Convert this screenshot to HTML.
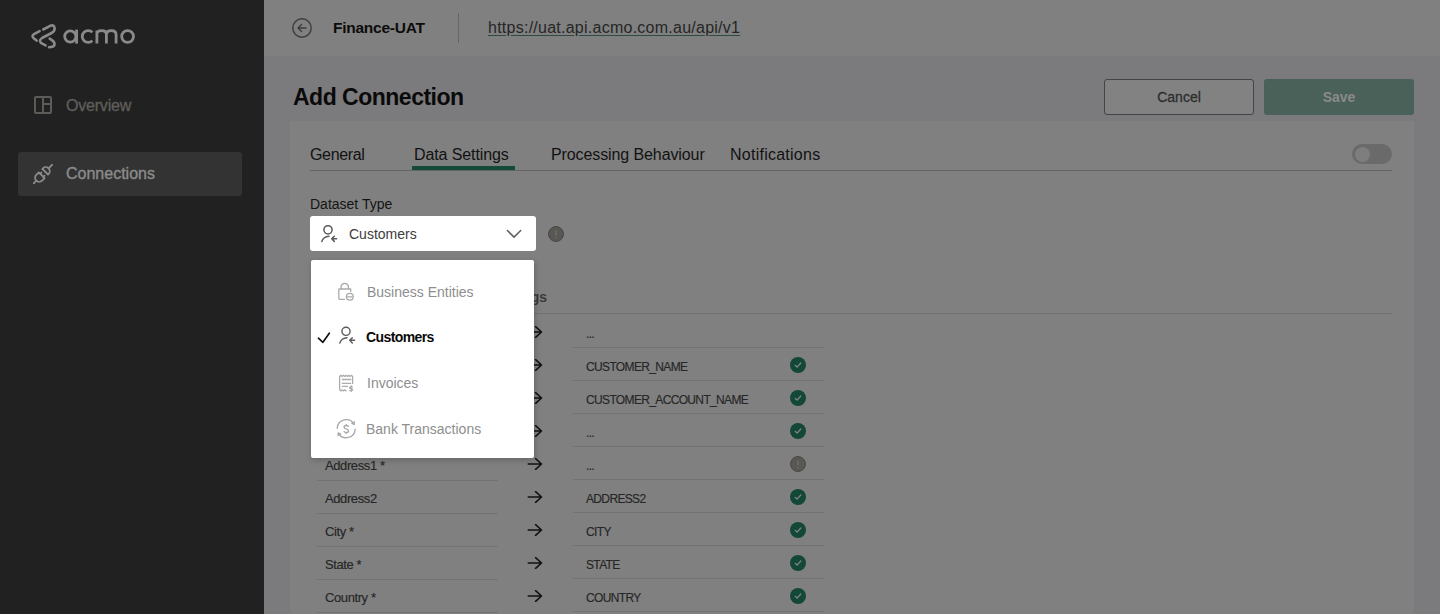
<!DOCTYPE html>
<html><head><meta charset="utf-8">
<style>
*{box-sizing:border-box;margin:0;padding:0}
html,body{width:1440px;height:614px;overflow:hidden;background:#7b7b7d;font-family:"Liberation Sans",sans-serif}
.a{position:absolute;white-space:nowrap}
.t{position:absolute;white-space:nowrap;line-height:1}
#side{position:absolute;left:0;top:0;width:264px;height:614px;background:#212121}
#hdr{position:absolute;left:264px;top:0;width:1176px;height:56px;background:#808080}
#card{position:absolute;left:290px;top:121px;width:1124px;height:600px;background:#808080}
.hl{position:absolute;height:1px;background:#737373}
.arrow{position:absolute;width:14px;height:12px}
.chk{position:absolute;width:16px;height:16px;border-radius:50%;background:#154c3c}
.lt{position:absolute;font-size:13px;line-height:1;color:#262626;white-space:nowrap;letter-spacing:-0.4px;-webkit-text-stroke:0.15px #262626}
.rt{position:absolute;font-size:12px;line-height:1;color:#262626;white-space:nowrap;letter-spacing:-0.65px;-webkit-text-stroke:0.15px #262626}
</style></head><body>
<div id="side">
  <!-- logo -->
  <svg class="a" style="left:0;top:0" width="264" height="60" viewBox="0 0 264 60">
    <g fill="none" stroke="#8a8a8a" stroke-width="2.6" stroke-linecap="round" stroke-linejoin="round">
      <path d="M39.6 31.2 L34 34.2 Q31.4 35.8 33.4 38 L36.6 40.6"/>
      <path d="M43.2 29.5 L50.2 25.8 Q54.4 24.2 54.6 28.6 Q54.7 31.4 51.6 33 L42 38 Q38.8 40 40.8 42.8 L45.6 45.4"/>
      <path d="M49.7 38.7 L52.6 40.6 Q55 42.4 54.4 45.2 Q53.8 47.2 49 47.3"/>
    </g>
    <g fill="none" stroke="#8a8a8a" stroke-width="2.8" stroke-linecap="butt">
      <circle cx="70.3" cy="36.5" r="5.6"/>
      <path d="M76.6 29.6 V43.6"/>
      <path d="M92.4 32.4 A5.9 5.9 0 1 0 92.4 40.6"/>
      <path d="M96.9 43.6 V30.4 M96.9 34.4 Q96.9 30.6 101.6 30.6 Q106.4 30.6 106.4 34.6 V43.6 M106.4 34.6 Q106.4 30.6 111.2 30.6 Q116.1 30.6 116.1 34.6 V43.6"/>
      <circle cx="127.6" cy="36.5" r="5.9"/>
    </g>
  </svg>
  <!-- overview -->
  <svg class="a" style="left:34px;top:96px" width="18" height="18" viewBox="0 0 18 18">
    <g fill="none" stroke="#5d5b58" stroke-width="2"><rect x="1" y="1" width="16" height="16" rx="1"/><path d="M9 1V17M9 8H17"/></g>
  </svg>
  <div class="t" style="left:66px;top:98px;font-size:16px;color:#5f5d5a;-webkit-text-stroke:0.35px #5f5d5a;letter-spacing:-0.2px">Overview</div>
  <!-- active item -->
  <div class="a" style="left:18px;top:152px;width:224px;height:44px;background:#333333;border-radius:3px"></div>
  <svg class="a" style="left:33px;top:164px" width="20" height="20" viewBox="0 0 20 20">
    <g transform="rotate(-45 10 10)" fill="none" stroke="#8c8c8c" stroke-width="1.8" stroke-linecap="round" stroke-linejoin="round">
      <path d="M-3.2 10H0.6"/>
      <path d="M8.2 5.9V14.1H4.6A4.1 4.1 0 0 1 4.6 5.9Z"/>
      <path d="M8.2 7.8H9.9M8.2 12.2H9.9"/>
      <path d="M13.2 5.9V13.9H14A4 4 0 0 0 14 5.9Z"/>
      <path d="M18 9.9H23.2"/>
    </g>
  </svg>
  <div class="t" style="left:66px;top:165.5px;font-size:16px;color:#8c8c8c;-webkit-text-stroke:0.35px #8c8c8c">Connections</div>
</div>

<div id="hdr"></div>
<svg class="a" style="left:292px;top:18px" width="20" height="20" viewBox="0 0 20 20">
  <g fill="none" stroke="#3c3c3c" stroke-width="1.4" stroke-linecap="round" stroke-linejoin="round">
    <circle cx="10" cy="10" r="9.2"/><path d="M14 10H6M9.5 6.6L6 10L9.5 13.4"/>
  </g>
</svg>
<div class="t" style="left:333px;top:19.8px;font-size:15.5px;font-weight:700;color:#0c0c0c;letter-spacing:-0.25px">Finance-UAT</div>
<div class="a" style="left:458px;top:13px;width:1px;height:30px;background:#666"></div>
<div class="t" style="left:488px;top:19.5px;font-size:16px;color:#262626;letter-spacing:0.25px;text-decoration:underline;text-underline-offset:2px;text-decoration-color:#2f4a40">https://uat.api.acmo.com.au/api/v1</div>

<div class="t" style="left:293px;top:85.5px;font-size:23px;font-weight:700;color:#0a0a0a;letter-spacing:-0.5px">Add Connection</div>
<div class="a" style="left:1104px;top:79px;width:150px;height:36px;border:1px solid #444;border-radius:3px;background:#828282"></div>
<div class="t" style="left:1104px;top:89.5px;width:150px;text-align:center;font-size:14px;color:#2e2e2e;-webkit-text-stroke:0.3px #2e2e2e">Cancel</div>
<div class="a" style="left:1264px;top:79px;width:150px;height:36px;background:#4a6159;border-radius:3px"></div>
<div class="t" style="left:1264px;top:89.5px;width:150px;text-align:center;font-size:14px;font-weight:700;color:#8a8a8a">Save</div>

<div id="card"></div>
<!-- tabs -->
<div class="t" style="left:310px;top:146.5px;font-size:16px;color:#121212;letter-spacing:-0.35px">General</div>
<div class="t" style="left:414px;top:146.5px;font-size:16px;color:#121212;letter-spacing:-0.1px">Data Settings</div>
<div class="t" style="left:551px;top:146.5px;font-size:16px;color:#121212;letter-spacing:-0.1px">Processing Behaviour</div>
<div class="t" style="left:730px;top:146.5px;font-size:16px;color:#121212;letter-spacing:0.25px">Notifications</div>
<div class="hl" style="left:310px;top:170px;width:1082px;background:#646464"></div>
<div class="a" style="left:412px;top:166px;width:103px;height:4px;background:#134a3a"></div>
<div class="a" style="left:1352px;top:144px;width:40px;height:20px;border-radius:10px;background:#6a6a6a"></div>
<div class="a" style="left:1355px;top:146.5px;width:15px;height:15px;border-radius:50%;background:#7e7e7e"></div>

<div class="t" style="left:310px;top:197px;font-size:14px;color:#141414">Dataset Type</div>
<!-- info icon -->
<svg class="a" style="left:548px;top:226px" width="16" height="16" viewBox="0 0 16 16"><circle cx="8" cy="8" r="7.5" fill="#595754" stroke="#4a4845" stroke-width="1"/><path d="M8 4.6V9.6" stroke="#6e6c6a" stroke-width="1.6"/><circle cx="8" cy="11.6" r="0.9" fill="#6e6c6a"/></svg>

<!-- section -->
<div class="t" style="left:330px;top:290px;width:217px;text-align:right;font-size:14px;font-weight:700;color:#3a3a3a">Default Field Mappings</div>
<div class="hl" style="left:310px;top:313px;width:1082px;background:#717171"></div>
<!--rows-->
<div class="hl" style="left:573px;top:347px;width:251px"></div>
<div class="hl" style="left:317px;top:348px;width:181px"></div>
<div class="lt" style="left:325px;top:327.3px">Customer ID *</div>
<div class="rt" style="left:586px;top:327.8px">...</div>
<svg class="a" style="left:527px;top:326px" width="16" height="12" viewBox="0 0 16 12"><path d="M1.3 6H14.5M8.6 0.6L14.5 6L8.6 11.4" fill="none" stroke="#111" stroke-width="1.6" stroke-linecap="round" stroke-linejoin="round"/></svg>
<div class="hl" style="left:573px;top:380px;width:251px"></div>
<div class="hl" style="left:317px;top:381px;width:181px"></div>
<div class="lt" style="left:325px;top:360.3px">Name *</div>
<div class="rt" style="left:586px;top:360.8px">CUSTOMER_NAME</div>
<svg class="a" style="left:527px;top:359px" width="16" height="12" viewBox="0 0 16 12"><path d="M1.3 6H14.5M8.6 0.6L14.5 6L8.6 11.4" fill="none" stroke="#111" stroke-width="1.6" stroke-linecap="round" stroke-linejoin="round"/></svg>
<svg class="a" style="left:790px;top:357px" width="16" height="16" viewBox="0 0 16 16"><circle cx="8" cy="8" r="8" fill="#134737"/><path d="M5.2 8.3L7.1 10.1L10.8 6" fill="none" stroke="#858585" stroke-width="1.2" stroke-linecap="round" stroke-linejoin="round"/></svg>
<div class="hl" style="left:573px;top:413px;width:251px"></div>
<div class="hl" style="left:317px;top:414px;width:181px"></div>
<div class="lt" style="left:325px;top:393.3px">Account Name</div>
<div class="rt" style="left:586px;top:393.8px">CUSTOMER_ACCOUNT_NAME</div>
<svg class="a" style="left:527px;top:392px" width="16" height="12" viewBox="0 0 16 12"><path d="M1.3 6H14.5M8.6 0.6L14.5 6L8.6 11.4" fill="none" stroke="#111" stroke-width="1.6" stroke-linecap="round" stroke-linejoin="round"/></svg>
<svg class="a" style="left:790px;top:390px" width="16" height="16" viewBox="0 0 16 16"><circle cx="8" cy="8" r="8" fill="#134737"/><path d="M5.2 8.3L7.1 10.1L10.8 6" fill="none" stroke="#858585" stroke-width="1.2" stroke-linecap="round" stroke-linejoin="round"/></svg>
<div class="hl" style="left:573px;top:446px;width:251px"></div>
<div class="hl" style="left:317px;top:447px;width:181px"></div>
<div class="lt" style="left:325px;top:426.3px">Email</div>
<div class="rt" style="left:586px;top:426.8px">...</div>
<svg class="a" style="left:527px;top:425px" width="16" height="12" viewBox="0 0 16 12"><path d="M1.3 6H14.5M8.6 0.6L14.5 6L8.6 11.4" fill="none" stroke="#111" stroke-width="1.6" stroke-linecap="round" stroke-linejoin="round"/></svg>
<svg class="a" style="left:790px;top:423px" width="16" height="16" viewBox="0 0 16 16"><circle cx="8" cy="8" r="8" fill="#134737"/><path d="M5.2 8.3L7.1 10.1L10.8 6" fill="none" stroke="#858585" stroke-width="1.2" stroke-linecap="round" stroke-linejoin="round"/></svg>
<div class="hl" style="left:573px;top:479px;width:251px"></div>
<div class="hl" style="left:317px;top:480px;width:181px"></div>
<div class="lt" style="left:325px;top:459.3px">Address1 *</div>
<div class="rt" style="left:586px;top:459.8px">...</div>
<svg class="a" style="left:527px;top:458px" width="16" height="12" viewBox="0 0 16 12"><path d="M1.3 6H14.5M8.6 0.6L14.5 6L8.6 11.4" fill="none" stroke="#111" stroke-width="1.6" stroke-linecap="round" stroke-linejoin="round"/></svg>
<svg class="a" style="left:790px;top:456px" width="16" height="16" viewBox="0 0 16 16"><circle cx="8" cy="8" r="7.5" fill="#595754" stroke="#4a4845" stroke-width="1"/><path d="M8 4.6V9.6" stroke="#6e6c6a" stroke-width="1.6"/><circle cx="8" cy="11.6" r="0.9" fill="#6e6c6a"/></svg>
<div class="hl" style="left:573px;top:512px;width:251px"></div>
<div class="hl" style="left:317px;top:513px;width:181px"></div>
<div class="lt" style="left:325px;top:492.3px">Address2</div>
<div class="rt" style="left:586px;top:492.8px">ADDRESS2</div>
<svg class="a" style="left:527px;top:491px" width="16" height="12" viewBox="0 0 16 12"><path d="M1.3 6H14.5M8.6 0.6L14.5 6L8.6 11.4" fill="none" stroke="#111" stroke-width="1.6" stroke-linecap="round" stroke-linejoin="round"/></svg>
<svg class="a" style="left:790px;top:489px" width="16" height="16" viewBox="0 0 16 16"><circle cx="8" cy="8" r="8" fill="#134737"/><path d="M5.2 8.3L7.1 10.1L10.8 6" fill="none" stroke="#858585" stroke-width="1.2" stroke-linecap="round" stroke-linejoin="round"/></svg>
<div class="hl" style="left:573px;top:545px;width:251px"></div>
<div class="hl" style="left:317px;top:546px;width:181px"></div>
<div class="lt" style="left:325px;top:525.3px">City *</div>
<div class="rt" style="left:586px;top:525.8px">CITY</div>
<svg class="a" style="left:527px;top:524px" width="16" height="12" viewBox="0 0 16 12"><path d="M1.3 6H14.5M8.6 0.6L14.5 6L8.6 11.4" fill="none" stroke="#111" stroke-width="1.6" stroke-linecap="round" stroke-linejoin="round"/></svg>
<svg class="a" style="left:790px;top:522px" width="16" height="16" viewBox="0 0 16 16"><circle cx="8" cy="8" r="8" fill="#134737"/><path d="M5.2 8.3L7.1 10.1L10.8 6" fill="none" stroke="#858585" stroke-width="1.2" stroke-linecap="round" stroke-linejoin="round"/></svg>
<div class="hl" style="left:573px;top:578px;width:251px"></div>
<div class="hl" style="left:317px;top:579px;width:181px"></div>
<div class="lt" style="left:325px;top:558.3px">State *</div>
<div class="rt" style="left:586px;top:558.8px">STATE</div>
<svg class="a" style="left:527px;top:557px" width="16" height="12" viewBox="0 0 16 12"><path d="M1.3 6H14.5M8.6 0.6L14.5 6L8.6 11.4" fill="none" stroke="#111" stroke-width="1.6" stroke-linecap="round" stroke-linejoin="round"/></svg>
<svg class="a" style="left:790px;top:555px" width="16" height="16" viewBox="0 0 16 16"><circle cx="8" cy="8" r="8" fill="#134737"/><path d="M5.2 8.3L7.1 10.1L10.8 6" fill="none" stroke="#858585" stroke-width="1.2" stroke-linecap="round" stroke-linejoin="round"/></svg>
<div class="hl" style="left:573px;top:611px;width:251px"></div>
<div class="hl" style="left:317px;top:612px;width:181px"></div>
<div class="lt" style="left:325px;top:591.3px">Country *</div>
<div class="rt" style="left:586px;top:591.8px">COUNTRY</div>
<svg class="a" style="left:527px;top:590px" width="16" height="12" viewBox="0 0 16 12"><path d="M1.3 6H14.5M8.6 0.6L14.5 6L8.6 11.4" fill="none" stroke="#111" stroke-width="1.6" stroke-linecap="round" stroke-linejoin="round"/></svg>
<svg class="a" style="left:790px;top:588px" width="16" height="16" viewBox="0 0 16 16"><circle cx="8" cy="8" r="8" fill="#134737"/><path d="M5.2 8.3L7.1 10.1L10.8 6" fill="none" stroke="#858585" stroke-width="1.2" stroke-linecap="round" stroke-linejoin="round"/></svg>
<!--/rows-->
<!-- select -->
<div class="a" style="left:310px;top:216px;width:226px;height:35px;background:#fff;border-radius:3px"></div>
<svg class="a" style="left:319px;top:223px" width="20" height="20" viewBox="0 0 20 20">
  <g fill="none" stroke="#5a5a5a" stroke-width="1.5" stroke-linecap="round" stroke-linejoin="round">
    <circle cx="9" cy="6.8" r="4.1"/><path d="M2.8 18.6 Q4.4 13.5 10 13.2"/><path d="M17.6 15.8H13M15.3 13.2L12.7 15.8L15.3 18.4"/>
  </g>
</svg>
<div class="t" style="left:349px;top:227px;font-size:14px;color:#3c3c3c">Customers</div>
<svg class="a" style="left:506px;top:228px" width="17" height="11" viewBox="0 0 17 11">
  <path d="M1.4 2.5 L8 9.1 L14.7 2.5" fill="none" stroke="#5e5e5e" stroke-width="1.5" stroke-linecap="round" stroke-linejoin="round"/>
</svg>

<!-- dropdown -->
<div class="a" style="left:311px;top:260px;width:223px;height:198px;background:#fff;border-radius:2px;box-shadow:1px 2px 6px rgba(0,0,0,0.22)"></div>
<svg class="a" style="left:335px;top:281px" width="22" height="22" viewBox="0 0 22 22">
  <g fill="none" stroke="#ababab" stroke-width="1.3" stroke-linecap="round" stroke-linejoin="round">
    <path d="M6.1 8 V5.5 A3.7 3.7 0 0 1 13.4 5.5 V8"/>
    <path d="M15.7 10.4 V8 H4.6 Q3.8 8 3.8 8.8 V17.6 Q3.8 18.4 4.6 18.4 H9.5"/>
    <circle cx="14.8" cy="15.7" r="3.4"/><path d="M12.2 15.9 H17.2"/>
  </g>
</svg>
<div class="t" style="left:367px;top:285px;font-size:14px;color:#8e8e8e">Business Entities</div>

<svg class="a" style="left:316px;top:330px" width="16" height="16" viewBox="0 0 16 16">
  <path d="M2.4 8.2 L6.9 12.3 L13.3 3.2" fill="none" stroke="#111" stroke-width="1.7" stroke-linecap="round" stroke-linejoin="round"/>
</svg>
<svg class="a" style="left:337px;top:324.5px" width="20" height="20" viewBox="0 0 20 20">
  <g fill="none" stroke="#5a5a5a" stroke-width="1.4" stroke-linecap="round" stroke-linejoin="round">
    <circle cx="9" cy="6.3" r="4.1"/><path d="M2.8 18.1 Q4.4 13 10 12.7"/><path d="M17.6 15.3H13M15.3 12.7L12.7 15.3L15.3 17.9"/>
  </g>
</svg>
<div class="t" style="left:366px;top:330px;font-size:14px;font-weight:700;color:#0a0a0a;letter-spacing:-0.6px">Customers</div>

<svg class="a" style="left:336px;top:373px" width="20" height="20" viewBox="0 0 20 20">
  <g fill="none" stroke="#acacac" stroke-width="1.3" stroke-linecap="round" stroke-linejoin="round">
    <path d="M3.6 3.4 V16.8 L4.90 17.9 L6.20 16.8 L7.50 17.9 L8.80 16.8 L10.10 17.9"/><path d="M3.6 3.4 L4.90 2.3 L6.20 3.4 L7.50 2.3 L8.80 3.4 L10.10 2.3 L11.40 3.4 L12.70 2.3 L14.00 3.4 L15.30 2.3 L16.60 3.4 L16.6 3.4 V10.6"/>
    <path d="M6.3 6.5 H14.8 M6.3 10.3 H14.8 M6.3 13.3 H11.5"/>
    <path d="M15.2 12.8 V18.6 M16.4 13.8 H14.5 Q13.6 13.8 13.6 14.8 Q13.6 15.7 15.2 15.7 Q16.6 15.7 16.6 16.6 Q16.6 17.6 15.6 17.6 H13.8"/>
  </g>
</svg>
<div class="t" style="left:367px;top:376px;font-size:14px;color:#8e8e8e">Invoices</div>

<svg class="a" style="left:334px;top:417px" width="24" height="24" viewBox="0 0 24 24">
  <g fill="none" stroke="#a8a8a8" stroke-width="1.3" stroke-linecap="round" stroke-linejoin="round">
    <path d="M3.21 11.23 A9 9 0 0 1 20.07 7.34"/><path d="M20.34 4.75 L20.07 7.34 L17.73 6.2"/>
    <path d="M21.19 12.17 A9 9 0 0 1 4.33 16.06"/><path d="M4.06 18.65 L4.33 16.06 L6.67 17.2"/>
    <path d="M14.3 9.4 Q13.8 8.5 12.2 8.5 Q10.1 8.5 10.1 10.2 Q10.1 11.6 12.2 11.9 Q14.5 12.3 14.5 13.9 Q14.5 15.5 12.2 15.5 Q10.6 15.5 10 14.5 M12.2 7.3 V8.5 M12.2 15.5 V16.6"/>
  </g>
</svg>
<div class="t" style="left:366px;top:422px;font-size:14px;color:#8e8e8e">Bank Transactions</div>

</body></html>
